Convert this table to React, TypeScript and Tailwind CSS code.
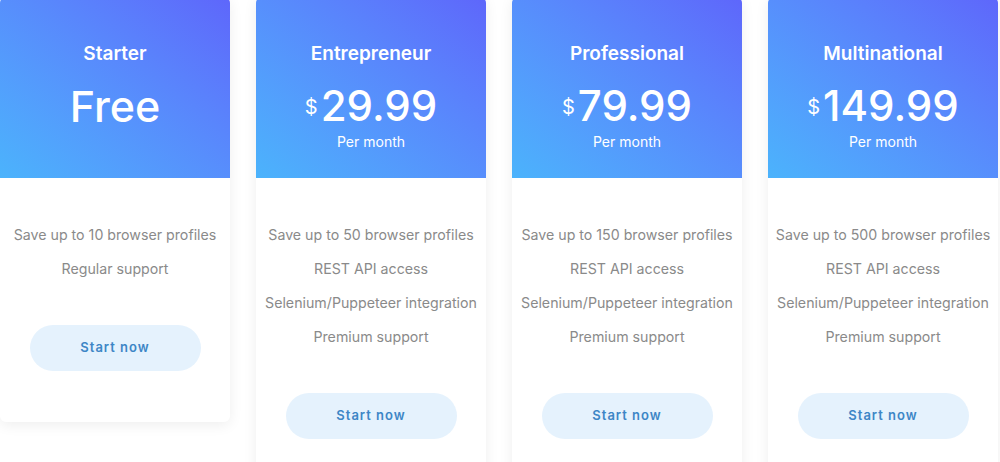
import React from 'react'

type Plan = {
  name: string
  price: string
  perMonth: boolean
  features: string[]
}

const plans: Plan[] = [
  { name: 'Starter', price: 'Free', perMonth: false, features: ['Save up to 10 browser profiles', 'Regular support'] },
  {
    name: 'Entrepreneur',
    price: '29.99',
    perMonth: true,
    features: ['Save up to 50 browser profiles', 'REST API access', 'Selenium/Puppeteer integration', 'Premium support'],
  },
  {
    name: 'Professional',
    price: '79.99',
    perMonth: true,
    features: ['Save up to 150 browser profiles', 'REST API access', 'Selenium/Puppeteer integration', 'Premium support'],
  },
  {
    name: 'Multinational',
    price: '149.99',
    perMonth: true,
    features: ['Save up to 500 browser profiles', 'REST API access', 'Selenium/Puppeteer integration', 'Premium support'],
  },
]

function PlanCard({ plan }: { plan: Plan }) {
  return (
    <div className="w-[230px] shrink-0 rounded-md bg-white shadow-[0_3px_14px_rgba(0,0,0,0.07)] overflow-hidden">
      <div className="h-[181px] bg-gradient-to-tr from-[#4bb3fc] to-[#5e66fb] flex flex-col items-center text-white">
        <h3 className="mt-[45px] text-[19px] font-semibold leading-[24px]">{plan.name}</h3>
        {plan.perMonth ? (
          <>
            <div className="mt-[19px] flex items-start leading-none">
              <span className="text-[20px] mt-[12px] mr-[3px]">$</span>
              <span className="text-[42px] font-medium leading-[42px]">{plan.price}</span>
            </div>
            <div className="mt-[6px] text-[14px] leading-[18px]">Per month</div>
          </>
        ) : (
          <div className="mt-[19px] text-[43px] font-medium leading-[42px]">{plan.price}</div>
        )}
      </div>
      <div className="pt-[47px] pb-[51px] flex flex-col items-center">
        <ul className="flex flex-col items-center gap-[14px] text-[14.2px] leading-[20px] text-[#8a8a8a]">
          {plan.features.map((f) => (
            <li key={f} className="whitespace-nowrap">{f}</li>
          ))}
        </ul>
        <button className="mt-[46px] w-[171px] h-[46px] rounded-full bg-[#e5f2fd] text-[#3d86c6] text-[13px] font-semibold tracking-[1px]">
          Start now
        </button>
      </div>
    </div>
  )
}

export default function App() {
  return (
    <div className="w-[1000px] h-[462px] overflow-hidden bg-white font-['Inter',sans-serif]">
      <div className="flex items-start gap-[26px] mt-[-3px]">
        {plans.map((p) => (
          <PlanCard key={p.name} plan={p} />
        ))}
      </div>
    </div>
  )
}
